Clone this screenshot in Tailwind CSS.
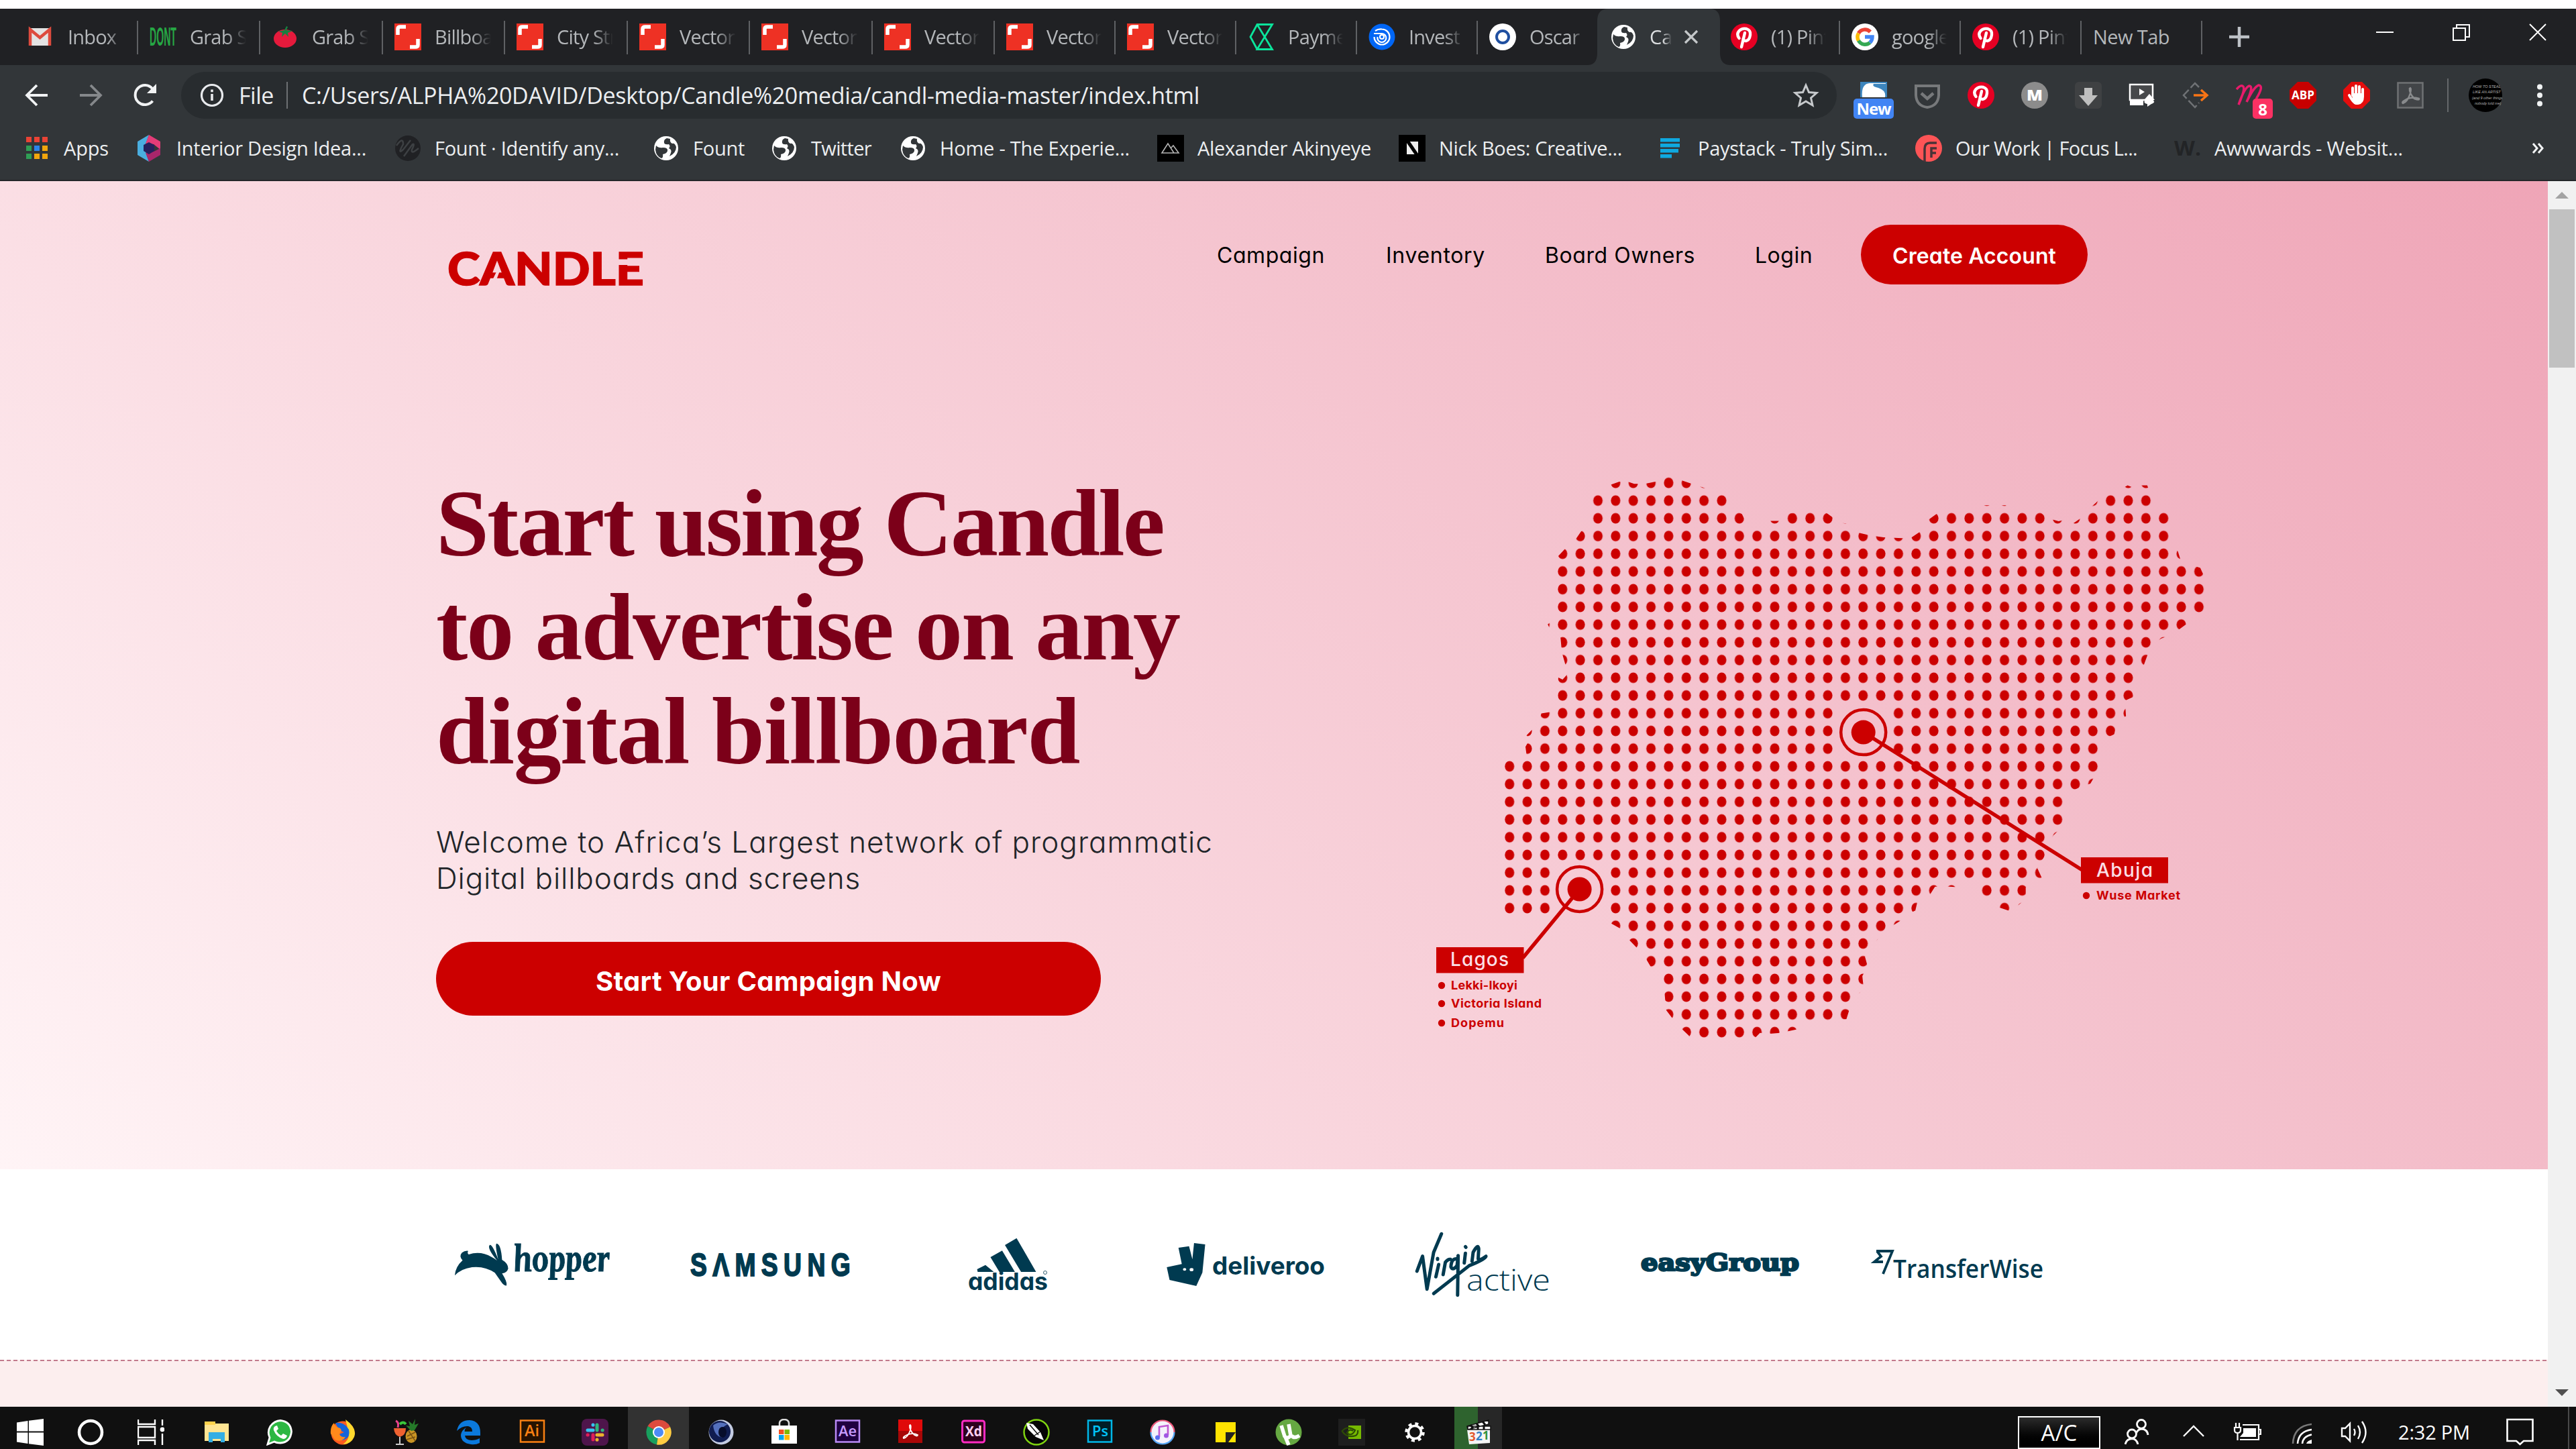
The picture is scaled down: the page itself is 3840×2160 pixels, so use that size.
<!DOCTYPE html>
<html lang="en">
<head>
<meta charset="utf-8">
<title>Candle</title>
<script src="https://cdn.jsdelivr.net/npm/@tailwindcss/browser@4"></script>
</head>
<body class="w-[3840px] h-[2160px] overflow-hidden bg-white font-['Open_Sans',sans-serif]">
<svg class="hidden">
  <symbol id="globe" viewBox="0 0 40 40"><circle cx="20" cy="20" r="18" fill="#fff"/><path d="M5 16Q9 20 15 19Q23 19 22 24Q21 28 15 29Q16 34 13 35Q5 32 4 22ZM21 5Q16 7 17 12Q18 15 24 14Q27 17 24 20Q29 22 27 27L25 32Q35 27 35 18Q33 12 29 13Q25 11 26 6Z" fill="#323639"/></symbol>
  <symbol id="shutter" viewBox="0 0 40 40"><path fill="#ee3124" d="M0 0h40v40H0z"/><path d="M5 17V8Q5 5 9 5H17M35 23V32Q35 35 31 35H23" fill="none" stroke="#fff" stroke-width="5.500"/></symbol>
  <symbol id="pin" viewBox="0 0 40 40"><circle cx="20" cy="20" r="20" fill="#e60023"/><path d="M12.500 22Q8 16 12.500 11Q17 6.500 23.500 8Q30 10 29 17Q28 25 22.500 26Q19 26 18.500 23M21 14L16 35" fill="none" stroke="#fff" stroke-width="4.400" stroke-linecap="round"/></symbol>
</svg>

<div class="h-[13px] bg-white"></div>

<!-- tab strip -->
<div class="h-[84px] bg-[#202124] flex text-[29px] text-[#b4b7ba] relative">
  <div class="w-[206px] flex items-center pl-[40px] relative"><svg class="w-10 h-10 shrink-0" viewBox="0 0 40 40"><path fill="#e3e3e3" d="M3 7h33v26H3z"/><path d="M5 33V9L19.500 21L34 9V33" fill="none" stroke="#dd4b3e" stroke-width="4.500"/></svg><span class="ml-[21px] w-[84px] overflow-hidden whitespace-nowrap tracking-[-0.8px] [mask-image:linear-gradient(to_right,#000_70%,transparent)]">Inbox</span><i class="absolute right-0 top-[18px] w-[2px] h-[50px] bg-[#5f6164]"></i></div>
  <div class="w-[182px] flex items-center pl-[17px] relative"><svg class="w-10 h-10 shrink-0" viewBox="0 0 40 40"><text x="0" y="33" textLength="40" lengthAdjust="spacingAndGlyphs" font-family="Liberation Sans" font-weight="bold" font-size="38" fill="#26a744">DONT</text></svg><span class="ml-[20px] w-[84px] overflow-hidden whitespace-nowrap tracking-[-0.8px] [mask-image:linear-gradient(to_right,#000_65%,transparent)]">Grab S</span><i class="absolute right-0 top-[18px] w-[2px] h-[50px] bg-[#5f6164]"></i></div>
  <div class="w-[183px] flex items-center pl-[17px] relative"><svg class="w-10 h-10 shrink-0" viewBox="0 0 40 40"><ellipse cx="20" cy="22.500" rx="17" ry="13.500" fill="#e51a3c"/><path d="M10 12L19 10L22 4L24 5L22 10L31 11L24 14L25 20L20 15L15 20L16 14Z" fill="#178040"/></svg><span class="ml-[20px] w-[84px] overflow-hidden whitespace-nowrap tracking-[-0.8px] [mask-image:linear-gradient(to_right,#000_65%,transparent)]">Grab S</span><i class="absolute right-0 top-[18px] w-[2px] h-[50px] bg-[#5f6164]"></i></div>
  <div class="w-[182px] flex items-center pl-[17px] relative"><svg class="w-10 h-10 shrink-0"><use href="#shutter"/></svg><span class="ml-[20px] w-[84px] overflow-hidden whitespace-nowrap tracking-[-0.8px] [mask-image:linear-gradient(to_right,#000_65%,transparent)]">Billboard</span><i class="absolute right-0 top-[18px] w-[2px] h-[50px] bg-[#5f6164]"></i></div>
  <div class="w-[183px] flex items-center pl-[17px] relative"><svg class="w-10 h-10 shrink-0"><use href="#shutter"/></svg><span class="ml-[20px] w-[84px] overflow-hidden whitespace-nowrap tracking-[-0.8px] [mask-image:linear-gradient(to_right,#000_65%,transparent)]">City Str</span><i class="absolute right-0 top-[18px] w-[2px] h-[50px] bg-[#5f6164]"></i></div>
  <div class="w-[182px] flex items-center pl-[17px] relative"><svg class="w-10 h-10 shrink-0"><use href="#shutter"/></svg><span class="ml-[20px] w-[84px] overflow-hidden whitespace-nowrap tracking-[-0.8px] [mask-image:linear-gradient(to_right,#000_65%,transparent)]">Vector</span><i class="absolute right-0 top-[18px] w-[2px] h-[50px] bg-[#5f6164]"></i></div>
  <div class="w-[183px] flex items-center pl-[17px] relative"><svg class="w-10 h-10 shrink-0"><use href="#shutter"/></svg><span class="ml-[20px] w-[84px] overflow-hidden whitespace-nowrap tracking-[-0.8px] [mask-image:linear-gradient(to_right,#000_65%,transparent)]">Vector</span><i class="absolute right-0 top-[18px] w-[2px] h-[50px] bg-[#5f6164]"></i></div>
  <div class="w-[182px] flex items-center pl-[17px] relative"><svg class="w-10 h-10 shrink-0"><use href="#shutter"/></svg><span class="ml-[20px] w-[82px] overflow-hidden whitespace-nowrap tracking-[-0.8px] [mask-image:linear-gradient(to_right,#000_65%,transparent)]">Vector</span><i class="absolute right-0 top-[18px] w-[2px] h-[50px] bg-[#5f6164]"></i></div>
  <div class="w-[180px] flex items-center pl-[17px] relative"><svg class="w-10 h-10 shrink-0"><use href="#shutter"/></svg><span class="ml-[20px] w-[82px] overflow-hidden whitespace-nowrap tracking-[-0.8px] [mask-image:linear-gradient(to_right,#000_65%,transparent)]">Vector</span><i class="absolute right-0 top-[18px] w-[2px] h-[50px] bg-[#5f6164]"></i></div>
  <div class="w-[180px] flex items-center pl-[17px] relative"><svg class="w-10 h-10 shrink-0"><use href="#shutter"/></svg><span class="ml-[20px] w-[82px] overflow-hidden whitespace-nowrap tracking-[-0.8px] [mask-image:linear-gradient(to_right,#000_65%,transparent)]">Vector</span><i class="absolute right-0 top-[18px] w-[2px] h-[50px] bg-[#5f6164]"></i></div>
  <div class="w-[180px] flex items-center pl-[17px] relative"><svg class="w-10 h-10 shrink-0" viewBox="0 0 40 40"><path d="M13 1.500H36.500L14 38.500H36.500L14 1.500L4 20L14 38.500" fill="none" stroke="#0be49b" stroke-width="2.800"/></svg><span class="ml-[20px] w-[82px] overflow-hidden whitespace-nowrap tracking-[-0.8px] [mask-image:linear-gradient(to_right,#000_65%,transparent)]">Payment</span><i class="absolute right-0 top-[18px] w-[2px] h-[50px] bg-[#5f6164]"></i></div>
  <div class="w-[180px] flex items-center pl-[17px] relative"><svg class="w-10 h-10 shrink-0" viewBox="0 0 40 40"><circle cx="20" cy="20" r="19.500" fill="#0066f5"/><g fill="none" stroke="#fff" stroke-width="2.200"><circle cx="20" cy="20" r="3"/><path d="M8 15H20A6.500 6.500 0 1 1 13.500 20M10 11Q14 8 20 8.500A11.500 11.500 0 1 1 8.500 20"/></g></svg><span class="ml-[20px] w-[82px] overflow-hidden whitespace-nowrap tracking-[-0.8px] [mask-image:linear-gradient(to_right,#000_65%,transparent)]">Invest</span><i class="absolute right-0 top-[18px] w-[2px] h-[50px] bg-[#5f6164]"></i></div>
  <div class="w-[180px] flex items-center pl-[17px]"><svg class="w-10 h-10 shrink-0" viewBox="0 0 40 40"><circle cx="20" cy="20" r="20" fill="#fff"/><circle cx="20" cy="20" r="9" fill="none" stroke="#1f4fa0" stroke-width="4"/></svg><span class="ml-[20px] w-[82px] overflow-hidden whitespace-nowrap tracking-[-0.8px] [mask-image:linear-gradient(to_right,#000_75%,transparent)]">Oscar</span></div>
  <div class="w-[180px] flex items-center pl-[17px] relative"><svg class="absolute -left-[17px] top-0 w-[214px] h-[84px]" viewBox="0 0 214 84"><path d="M0 84Q15 84 15 66V18Q15 0 32 0H182Q198 0 198 18V66Q198 84 214 84Z" fill="#323639"/></svg><svg class="w-10 h-10 shrink-0 relative"><use href="#globe"/></svg><span class="ml-[19px] w-[33px] overflow-hidden whitespace-nowrap relative text-[#dcdee0] [mask-image:linear-gradient(to_right,#000_60%,transparent)]">Can</span><svg class="relative ml-[17px] w-[24px] h-[24px]" viewBox="0 0 24 24"><path d="M3 3L21 21M21 3L3 21" stroke="#c4c7c9" stroke-width="3.200"/></svg></div>
  <div class="w-[180px] flex items-center pl-[17px] relative"><svg class="w-10 h-10 shrink-0"><use href="#pin"/></svg><span class="ml-[20px] w-[82px] overflow-hidden whitespace-nowrap tracking-[-0.8px] [mask-image:linear-gradient(to_right,#000_65%,transparent)]">(1) Pint</span><i class="absolute right-0 top-[18px] w-[2px] h-[50px] bg-[#5f6164]"></i></div>
  <div class="w-[180px] flex items-center pl-[17px] relative"><svg class="w-10 h-10 shrink-0" viewBox="0 0 40 40"><circle cx="20" cy="20" r="20" fill="#fff"/><g fill="none" stroke-width="5.500"><path d="M10.500 14.500A11 11 0 0 1 28 12.500" stroke="#ea4335"/><path d="M10.500 14.500A11 11 0 0 0 10.500 25.500" stroke="#fbbc05"/><path d="M10.500 25.500A11 11 0 0 0 27.500 28.500" stroke="#34a853"/><path d="M27.500 28.500Q31 25 31 20H20" stroke="#4285f4"/></g></svg><span class="ml-[20px] w-[82px] overflow-hidden whitespace-nowrap tracking-[-0.8px] [mask-image:linear-gradient(to_right,#000_65%,transparent)]">google</span><i class="absolute right-0 top-[18px] w-[2px] h-[50px] bg-[#5f6164]"></i></div>
  <div class="w-[180px] flex items-center pl-[17px] relative"><svg class="w-10 h-10 shrink-0"><use href="#pin"/></svg><span class="ml-[20px] w-[82px] overflow-hidden whitespace-nowrap tracking-[-0.8px] [mask-image:linear-gradient(to_right,#000_65%,transparent)]">(1) Pint</span><i class="absolute right-0 top-[18px] w-[2px] h-[50px] bg-[#5f6164]"></i></div>
  <div class="w-[180px] flex items-center pl-[17px] relative whitespace-nowrap"><span data-fit="114">New Tab</span><i class="absolute right-0 top-[18px] w-[2px] h-[50px] bg-[#5f6164]"></i></div>
  <div class="flex items-center pl-[39px]"><svg class="w-8 h-8" viewBox="0 0 32 32"><path d="M16 1V31M1 16H31" stroke="#bdc1c6" stroke-width="4.500"/></svg></div>
  <div class="ml-auto flex gap-[88px] pr-[44px] pt-[22px]">
    <svg class="w-[26px] h-[26px]" viewBox="0 0 26 26"><path d="M0 13H26" stroke="#fff" stroke-width="2"/></svg>
    <svg class="w-[26px] h-[26px] overflow-visible" viewBox="0 0 26 26"><path d="M1 7H19V25H1ZM6 7V2H25V20H19" fill="none" stroke="#fff" stroke-width="2"/></svg>
    <svg class="w-[26px] h-[26px]" viewBox="0 0 26 26"><path d="M1 1L25 25M25 1L1 25" stroke="#fff" stroke-width="2"/></svg>
  </div>
</div>

<!-- toolbar -->
<div class="h-[90px] bg-[#323639] flex items-center text-[34px] text-[#eceef0]">
  <svg class="ml-[35px] w-10 h-10" viewBox="0 0 40 40"><path d="M36 20H6M20 5L5 20L20 35" fill="none" stroke="#f1f3f4" stroke-width="3.800"/></svg>
  <svg class="ml-[40px] w-10 h-10" viewBox="0 0 40 40"><path d="M4 20H34M20 5L35 20L20 35" fill="none" stroke="#85888b" stroke-width="3.800"/></svg>
  <svg class="ml-[41px] w-10 h-10" viewBox="0 0 40 40"><path d="M31.500 28.500A14.500 14.500 0 1 1 31 10" fill="none" stroke="#f1f3f4" stroke-width="4"/><path d="M37 3V17H23Z" fill="#f1f3f4"/></svg>
  <div class="ml-[34px] w-[2468px] h-[70px] rounded-full bg-[#282c2f] flex items-center">
    <svg class="ml-[26px] w-10 h-10 shrink-0" viewBox="0 0 40 40"><circle cx="20" cy="20" r="15.500" fill="none" stroke="#e8eaed" stroke-width="3.200"/><path d="M20 18V28M20 11.500V15.200" stroke="#e8eaed" stroke-width="3.600"/></svg>
    <span class="ml-[20px] w-[52px] shrink-0 whitespace-nowrap" data-fit="52">File</span>
    <i class="ml-[19px] w-[2px] h-10 bg-[#6d7073]"></i>
    <span class="ml-[21px] whitespace-nowrap" data-fit="1338">C:/Users/ALPHA%20DAVID/Desktop/Candle%20media/candl-media-master/index.html</span>
    <svg class="ml-auto mr-[26px] w-10 h-10" viewBox="0 0 40 40"><path d="M20 5L24.500 15.500L36 16.500L27.500 24L30 35L20 29L10 35L12.500 24L4 16.500L15.500 15.500Z" fill="none" stroke="#c6c9cc" stroke-width="3"/></svg>
  </div>
  <div class="flex items-center gap-[40px] ml-[35px]">
    <div class="relative w-10 h-10"><svg class="w-10 h-10" viewBox="0 0 40 40"><path fill="#3d85bd" d="M0 0H40V23H0Z"/><path fill="#fff" d="M38 3H20Q17 7 27 9Q39 13 37 23H3Q1 3 14 2H38Z"/></svg><span class="absolute -left-[10px] top-[25px] w-[60px] h-[30px] rounded-[5px] bg-[#4285f4] text-white text-[24px] leading-[30px] font-bold text-center tracking-[-1px]">New</span></div>
    <svg class="w-10 h-10" viewBox="0 0 40 40"><path d="M3 6H37V20Q36 36 20 38Q4 36 3 20Z" fill="none" stroke="#77797b" stroke-width="4"/><path d="M11 17L20 25L29 17" fill="none" stroke="#77797b" stroke-width="4.500"/></svg>
    <svg class="w-10 h-10"><use href="#pin"/></svg>
    <svg class="w-10 h-10" viewBox="0 0 40 40"><circle cx="20" cy="20" r="20" fill="#8c8c8c"/><text x="8" y="28" font-family="Open Sans" font-weight="800" font-size="23" fill="#fff" textLength="24" lengthAdjust="spacingAndGlyphs">M</text></svg>
    <svg class="w-10 h-10" viewBox="0 0 40 40"><rect width="40" height="40" rx="6" fill="#3f4143"/><path d="M14 9H26V20H34L20 36L6 20H14Z" fill="#bfbfbf"/></svg>
    <svg class="w-10 h-10" viewBox="0 0 40 40"><path fill="#47494b" stroke="#fff" stroke-width="2.500" d="M2 4H36V27H2Z"/><path d="M16 10L24 15L16 20ZM2 28H22V35H2Z" fill="#fff"/><path d="M31 18L39 27H35Q42 30 34 33L28 37V33Q20 31 26 26H24Z" fill="#fff"/></svg>
    <svg class="w-10 h-10" viewBox="0 0 40 40"><path d="M25 8L19 2L2 20L19 38L25 31" fill="none" stroke="#6f7275" stroke-width="2.500" stroke-dasharray="18 4"/><path d="M17 20H36M28 12L37 20L28 28" fill="none" stroke="#f87415" stroke-width="3.500"/></svg>
    <div class="relative w-10 h-10"><svg class="w-10 h-10" viewBox="0 0 40 40"><path d="M1 11Q8 3 11 7Q14 11 4 34Q13 8 20 6Q27 6 16 30Q27 7 34 5Q42 6 31 24Q29 31 36 30" fill="none" stroke="#e81b6b" stroke-width="3.500"/></svg><span class="absolute left-[25px] top-[25px] w-[30px] h-[30px] rounded-[5px] bg-[#fb3163] text-white text-[24px] leading-[31px] font-bold text-center">8</span></div>
    <svg class="w-10 h-10" viewBox="0 0 40 40"><path d="M12 0H28L40 12V28L28 40H12L0 28V12Z" fill="#c80000"/><text x="3" y="26" textLength="34" lengthAdjust="spacingAndGlyphs" font-family="Open Sans" font-weight="bold" font-size="17" fill="#fff">ABP</text></svg>
    <svg class="w-10 h-10" viewBox="0 0 40 40"><path d="M12 0H28L40 12V28L28 40H12L0 28V12Z" fill="#e40d0d"/><path d="M14 20V9M19 18V6M24 18V7M29 20V11M29 18V22Q29 31 22 32H19Q15 31 9 20" fill="none" stroke="#fff" stroke-width="4" stroke-linecap="round"/><path d="M13 17H29V26L22 33L14 28Z" fill="#fff"/></svg>
    <svg class="w-10 h-10" viewBox="0 0 40 40"><path fill="#424548" stroke="#6f7173" stroke-width="2.500" d="M1.500 1.500H38.500V38.500H1.500Z"/><path d="M19 9Q22 9 20 17Q16 30 9 32Q6 30 16 25Q26 22 33 25Q34 28 26 25Q18 17 19 9" fill="none" stroke="#898b8d" stroke-width="2.500"/></svg>
  </div>
  <i class="ml-[35px] w-[2px] h-[50px] bg-[#65686b]"></i>
  <svg class="ml-[30px] w-[50px] h-[50px]" viewBox="0 0 50 50"><circle cx="25" cy="25" r="25" fill="#000"/><g font-family="Liberation Sans" font-size="5.500" font-style="italic" fill="#b5b5b5"><text x="6" y="14">HOW TO STEAL</text><text x="6" y="22">LIKE AN ARTIST</text><text x="5" y="31">(and 9 other things</text><text x="9" y="39">nobody told me)</text></g></svg>
  <svg class="ml-[50px] w-[12px] h-10" viewBox="0 0 12 40"><g fill="#f1f3f4"><circle cx="6" cy="7.500" r="4"/><circle cx="6" cy="20" r="4"/><circle cx="6" cy="32.500" r="4"/></g></svg>
</div>

<!-- bookmarks -->
<div class="h-[83px] bg-[#323639] border-b-2 border-[#232629] flex items-center pl-[35px] pb-[13px] text-[29px] text-[#eceef0] whitespace-nowrap">
  <div class="w-[168px] shrink-0 flex items-center gap-[20px]"><svg class="w-10 h-10 shrink-0" viewBox="0 0 40 40"><path fill="#ea4335" d="M4 3h8v8H4zM16 3h8v8h-8zM28 3h8v8h-8z"/><path fill="#2f9e55" d="M4 16h8v8H4zM4 28h8v8H4z"/><path fill="#2b84ea" d="M16 16h8v8h-8z"/><path fill="#f2a60d" d="M28 16h8v8h-8zM16 28h8v8h-8zM28 28h8v8h-8z"/></svg><span data-fit="67">Apps</span></div>
  <div class="w-[385px] shrink-0 flex items-center gap-[20px]"><svg class="w-10 h-10 shrink-0" viewBox="0 0 40 40"><path fill="#4aaee0" d="M19 0L2 10V30L19 40L14 24V14Z"/><path fill="#e43c78" d="M19 0L36 10V22L26 14L14 13Z"/><path fill="#a9266b" d="M36 20V30L19 40L14 27L26 25Z"/><path fill="#26205c" d="M19 11L27 15V24L19 29L11 24V15Z"/></svg><span data-fit="283">Interior Design Idea...</span></div>
  <div class="w-[385px] shrink-0 flex items-center gap-[20px]"><svg class="w-10 h-10 shrink-0" viewBox="0 0 40 40"><circle cx="20" cy="20" r="19" fill="#202124"/><path d="M3 16Q13 2 13 14Q4 30 13 22L24 8M14 32L27 14Q31 12 26 22Q24 30 36 20" fill="none" stroke="#3d4043" stroke-width="2.500"/></svg><span data-fit="275">Fount · Identify any...</span></div>
  <div class="w-[176px] shrink-0 flex items-center gap-[20px]"><svg class="w-10 h-10 shrink-0"><use href="#globe"/></svg><span data-fit="77">Fount</span></div>
  <div class="w-[192px] shrink-0 flex items-center gap-[20px]"><svg class="w-10 h-10 shrink-0"><use href="#globe"/></svg><span data-fit="90">Twitter</span></div>
  <div class="w-[384px] shrink-0 flex items-center gap-[20px]"><svg class="w-10 h-10 shrink-0"><use href="#globe"/></svg><span data-fit="283">Home - The Experie...</span></div>
  <div class="w-[360px] shrink-0 flex items-center gap-[20px]"><svg class="w-10 h-10 shrink-0" viewBox="0 0 40 40"><path d="M0 0h40v40H0z"/><path d="M7 27L16 13L25 27ZM20 20L24 16L32 27H7" fill="none" stroke="#b4b4b4" stroke-width="1.600"/></svg><span data-fit="259">Alexander Akinyeye</span></div>
  <div class="w-[386px] shrink-0 flex items-center gap-[20px]"><svg class="w-10 h-10 shrink-0" viewBox="0 0 40 40"><path d="M0 0h40v40H0z"/><path fill="#eee" d="M12 10H29V29H12Z"/><path d="M13 9L28 31" stroke="#000" stroke-width="5"/></svg><span data-fit="273">Nick Boes: Creative...</span></div>
  <div class="w-[384px] shrink-0 flex items-center gap-[20px]"><svg class="w-10 h-10 shrink-0" viewBox="0 0 40 40"><path fill="#0fa9e0" d="M4 5h29v5.500H4zM4 13h29v5.500H4zM4 21h27v5.500H4zM4 29h17v5.500H4z"/></svg><span data-fit="283">Paystack - Truly Sim...</span></div>
  <div class="w-[386px] shrink-0 flex items-center gap-[20px]"><svg class="w-10 h-10 shrink-0" viewBox="0 0 40 40"><circle cx="20" cy="20" r="20" fill="#fd5456"/><path d="M14 40V21Q14 12 22 12H32M24 34V20H32M24 27H31" fill="none" stroke="#4a3337" stroke-width="3.500"/></svg><span data-fit="271">Our Work | Focus L...</span></div>
  <div class="w-[400px] shrink-0 flex items-center gap-[20px]"><svg class="w-10 h-10 shrink-0" viewBox="0 0 40 40"><text x="0" y="31" textLength="40" lengthAdjust="spacingAndGlyphs" font-family="Open Sans" font-weight="bold" font-size="30" fill="#222426">W.</text></svg><span data-fit="281">Awwwards - Websit...</span></div>
  <svg class="ml-[131px] w-[22px] h-[16px] shrink-0" viewBox="0 0 22 16"><path d="M4 1L10 8L4 15M12 1L18 8L12 15" fill="none" stroke="#f1f3f4" stroke-width="3"/></svg>
</div>

<!-- page viewport -->
<div class="flex h-[1827px]">
 <div class="w-[3798px] font-['Inter',sans-serif] [font-feature-settings:'cv11']">
  <section class="h-[1473px] bg-[linear-gradient(45deg,#fff4f6_0%,#fadae1_33%,#f4c0cc_66%,#efa5b7_100%)]">
   <header class="flex h-[230px] text-[32px] text-black whitespace-nowrap">
     <svg class="ml-[665px] mt-[100px] w-[300px] h-[62px]" viewBox="0 0 300 62">
       <mask id="cuts"><path fill="#fff" d="M0 0h300v62H0z"/><path fill="#000" d="M240 16.500H300V25H240ZM65 56L77 31L80 34L75 47L71 56Z"/></mask>
       <text mask="url(#cuts)" x="2" y="54.500" textLength="293" lengthAdjust="spacingAndGlyphs" font-family="Lato" font-weight="900" font-size="67" fill="#c00" stroke="#c00" stroke-width="1.500">CANDLE</text>
     </svg>
     <nav class="flex items-start pt-[87px] w-[1739px] shrink-0">
       <a class="ml-[849px]" data-fit="161">Campaign</a><a class="ml-[91px]" data-fit="148">Inventory</a><a class="ml-[89px]" data-fit="224">Board Owners</a><a class="ml-[89px]" data-fit="86">Login</a>
     </nav>
     <a class="ml-[70px] mt-[65px] w-[338px] h-[89px] rounded-full bg-[#c00] text-white font-semibold flex items-center justify-center pt-[4px]"><span data-fit="244">Create Account</span></a>
   </header>
   <div class="flex">
    <div class="ml-[650px] pt-[203px] w-[1300px] whitespace-nowrap">
      <h1 class="font-['Liberation_Serif',serif] font-bold text-[142px] leading-[155px] text-[#7c0019]">
        <span class="block w-max" data-fit="1084">Start using Candle</span><span class="block w-max" data-fit="1108">to advertise on any</span><span class="block w-max" data-fit="959">digital billboard</span>
      </h1>
      <p class="mt-[60px] font-light text-[44px] leading-[54px] text-[#212529]"><span class="block w-max" data-fit="1158">Welcome to Africa’s Largest network of programmatic</span><span class="block w-max" data-fit="633">Digital billboards and screens</span></p>
      <a class="mt-[68px] w-[991px] h-[110px] rounded-full bg-[#c00] text-white text-[40px] font-bold flex items-center justify-center pt-[8px]"><span data-fit="515">Start Your Campaign Now</span></a>
    </div>
    <svg class="ml-[150px] mt-[180px] w-[1240px] h-[900px]" viewBox="0 0 1240 900" font-family="Inter">
      <defs>
        <pattern id="dots" patternUnits="userSpaceOnUse" x="137.100" y="26.600" width="26.350" height="26.410"><ellipse cx="13.170" cy="13.200" rx="7" ry="7.800" fill="#c00"/></pattern>
        <clipPath id="country"><path clip-rule="evenodd" transform="scale(.7908 .574)" d="M340 100L381 74L397 66L413 66L425 72L445 72L465 66L475 55L495 52L515 63L532 71L556 82L585 98L605 102L612 120L615 142L628 150L640 185L665 192L682 168L698 168L712 150L735 145L785 145L800 160L810 172L825 175L830 190L846 198L870 206L895 211L930 213L948 211L965 195L975 170L995 150L1040 140L1085 127L1125 127L1140 142L1190 145L1205 162L1215 165L1225 169L1240 164L1252 175L1268 160L1280 140L1296 120L1310 100L1340 88L1355 76L1366 82L1380 76L1392 76L1402 110L1415 140L1440 150L1432 190L1435 220L1450 248L1455 270L1480 285L1492 290L1502 320L1505 400L1500 405L1470 432L1450 452L1440 462L1418 474L1402 490L1393 515L1385 545L1370 565L1368 600L1366 625L1350 635L1352 675L1335 690L1330 722L1310 735L1300 770L1300 815L1285 850L1262 862L1240 875L1235 930L1230 965L1215 985L1205 1010L1198 1040L1185 1070L1195 1100L1178 1110L1163 1120L1163 1150L1150 1165L1130 1180L1113 1172L1100 1150L1075 1140L1072 1105L1060 1095L1045 1100L1030 1119L1010 1117L992 1118L982 1140L960 1150L955 1180L940 1190L925 1208L900 1230L883 1256L868 1280L860 1300L865 1325L855 1350L857 1375L850 1394L835 1405L830 1440L825 1462L790 1465L760 1475L730 1489L700 1498L680 1500L662 1498L650 1515L530 1512L528 1505L515 1488L497 1460L485 1438L482 1390L475 1345L460 1335L445 1300L430 1277L416 1257L420 1240L400 1228L382 1214L375 1190L178 1190L178 790L200 785L222 775L220 755L228 735L222 725L234 708L245 690L250 668L268 664L282 650L280 590L282 575L290 580L298 568L296 545L290 516L288 500L286 470L282 455L266 448L262 437L272 425L280 400L280 262L295 240L315 215L325 195L345 180L345 130Z M806 645V783H906V645Z M272 1058V1195H372V1058Z"/></clipPath>
      </defs>
      <rect width="1240" height="900" fill="url(#dots)" clip-path="url(#country)"/>
      <g fill="none" stroke="#c00"><circle cx="677.700" cy="411.600" r="33.500" stroke-width="4.500"/><circle cx="254.600" cy="645.500" r="33.500" stroke-width="4.500"/><path d="M677.700 411.600L1004 617M254.600 645.500L170 748" stroke-width="5.500"/></g>
      <g fill="#c00"><circle cx="677.700" cy="411.600" r="18"/><circle cx="254.600" cy="645.500" r="18"/><path d="M41 732H171.500V770.500H41ZM1002 598H1132V636.500H1002Z"/><circle cx="49" cy="789" r="5.200"/><circle cx="49" cy="816" r="5.200"/><circle cx="49" cy="845" r="5.200"/><circle cx="1010" cy="655" r="5.200"/></g>
      <g fill="#fbdfe5" font-size="28" font-weight="500"><text x="62" y="760" textLength="87">Lagos</text><text x="1025" y="626.500" textLength="84">Abuja</text></g>
      <g fill="#c00" font-size="18" font-weight="700"><text x="63" y="794.500" textLength="99">Lekki-Ikoyi</text><text x="63" y="821.500" textLength="135">Victoria Island</text><text x="63" y="850.500" textLength="79">Dopemu</text><text x="1025" y="660.500" textLength="125">Wuse Market</text></g>
    </svg>
   </div>
  </section>

  <section class="h-[284px] bg-white flex items-start pt-[77px] pl-[670px] text-[#003a50]">
    <!-- each mark is drawn on a 120px tall strip -->
    <svg class="w-[350px] h-[120px]" viewBox="670 1820 350 120" fill="#003a50"><g transform="translate(600 1780) scale(.8292 .3333)"><path d="M94 364Q95 325 108 296Q101 278 107 262Q112 252 118 254Q116 265 119 270Q140 253 160 281Q166 288 170 297Q151 240 157 227Q162 226 172 292Q166 225 169 221Q177 222 179 294Q190 310 190 333Q188 352 179 355Q189 395 187 409Q182 411 177 391L166 352Q148 321 125 327Q105 334 94 364Z"/></g><text transform="translate(767 1895) skewX(6)" textLength="144" lengthAdjust="spacingAndGlyphs" font-family="Liberation Serif" font-style="italic" font-weight="bold" font-size="59" stroke="#003a50">hopper</text></svg>
    <svg class="w-[380px] h-[120px]" viewBox="1020 1820 380 120" fill="#003a50"><text transform="translate(1029 1902) scale(.76 1)" textLength="314" font-family="Liberation Sans" font-weight="bold" font-size="49" stroke="#003a50" stroke-width="2">SΛMSUNG</text></svg>
    <svg class="w-[300px] h-[120px]" viewBox="1400 1820 300 120" fill="#003a50"><g transform="translate(600 1780) scale(.8292 .3333)"><path d="M1033 336L1048 317L1063 348H1034ZM1057 282L1078 253L1101 348H1073ZM1083 228L1104 197L1139 348H1112Z"/></g><text x="1443" y="1923" textLength="119" lengthAdjust="spacingAndGlyphs" font-family="Inter" font-weight="bold" font-size="36" font-feature-settings="'cv11'">adidas</text><circle cx="1558" cy="1897" r="2.500" fill="none" stroke="#003a50" stroke-width=".8"/></svg>
    <svg class="w-[370px] h-[120px]" viewBox="1700 1820 370 120" fill="#003a50"><g transform="translate(600 1780) scale(.8292 .3333)"><path d="M1374 327L1401 313L1395 240L1414 233L1420 292L1423 219L1443 225L1438 351L1427 411L1379 384Z"/><path fill="#fff" d="M1403 337a3 6 0 1 0 6 0a3 6 0 1 0 -6 0M1415 338a3.500 7 0 1 0 7 0a3.500 7 0 1 0 -7 0"/></g><text x="1807" y="1900" textLength="168" lengthAdjust="spacingAndGlyphs" font-family="Inter" font-weight="bold" font-size="37">deliveroo</text></svg>
    <svg class="w-[330px] h-[120px]" viewBox="2070 1820 330 120" fill="#003a50"><g transform="translate(1900 1780) scale(.8292 .3333)" fill="none" stroke="#003a50" stroke-linecap="round" stroke-linejoin="round"><path vector-effect="non-scaling-stroke" stroke-width="5" d="M256 345L266 278L274 425L286 260L300 178M293 288V292M290 370L295 315M303 360L307 305Q312 290 316 292M329 290Q318 285 317 325Q320 345 328 320L330 275L329 452M343 235L344 238M341 308L343 265M355 300L357 260Q366 220 367 245L366 290Q368 300 380 278Q380 290 350 320L286 445"/></g><text x="2186" y="1924" textLength="125" lengthAdjust="spacingAndGlyphs" font-family="Open Sans" font-weight="300" font-size="44">active</text></svg>
    <svg class="w-[350px] h-[120px]" viewBox="2400 1820 350 120" fill="#003a50"><text x="2446" y="1894" textLength="236" lengthAdjust="spacingAndGlyphs" font-family="DejaVu Serif" font-weight="bold" font-size="36" stroke="#003a50" stroke-width="2.600">easyGroup</text></svg>
    <svg class="w-[340px] h-[120px]" viewBox="2750 1820 340 120" fill="#003a50"><path d="M2797 1865H2821L2807 1899M2798 1865L2804 1873L2794 1881H2807" fill="none" stroke="#003a50" stroke-width="3.800"/><text x="2822" y="1905" textLength="224" lengthAdjust="spacingAndGlyphs" font-family="Open Sans" font-weight="600" font-size="37">TransferWise</text></svg>
  </section>
  <div class="h-[2px] bg-[repeating-linear-gradient(to_right,#c27a8c_0_6px,#fceeee_6px_10px)]"></div>
  <section class="h-[68px] bg-[#fceeee]"></section>
 </div>
 <!-- scrollbar -->
 <div class="w-[42px] bg-[#f1f1f1] flex flex-col items-center">
   <svg class="w-[42px] h-[42px]" viewBox="0 0 42 42"><path d="M11 26L21 16L31 26Z" fill="#a3a3a3"/></svg>
   <div class="w-[38px] h-[236px] bg-[#c1c1c1]"></div>
   <svg class="mt-auto w-[42px] h-[42px]" viewBox="0 0 42 42"><path d="M11 16H31L21 26Z" fill="#505050"/></svg>
 </div>
</div>

<!-- taskbar -->
<div class="h-[63px] bg-[#101010] flex">
  <div class="w-[90px] flex justify-center pt-[18px]"><svg class="w-10 h-10" viewBox="0 0 40 40"><path fill="#fff" d="M0 5.500L16.500 3V18.500H0ZM18 2.800L40 0V18.500H18ZM0 20.500H16.500V37L0 34.500ZM18 20.500H40V40L18 37.200Z"/></svg></div>
  <div class="w-[90px] flex justify-center pt-[18px]"><svg class="w-10 h-10" viewBox="0 0 40 40"><circle cx="20" cy="20" r="17" fill="none" stroke="#fff" stroke-width="4.500"/></svg></div>
  <div class="w-[96px] flex justify-center pt-[18px] pr-[6px]"><svg class="w-10 h-10" viewBox="0 0 40 40"><path d="M1 1V8H26V1M1 12H26V28H1ZM1 39V32H26V39M37 1V10M37 22V39" fill="none" stroke="#fff" stroke-width="2.400"/><circle cx="37" cy="16" r="3.400" fill="#fff"/></svg></div>
  <div class="w-[94px] flex justify-center pt-[18px]"><svg class="w-10 h-10" viewBox="0 0 40 40"><path fill="#ffd24d" d="M2 4H18V10H2Z"/><path fill="#ffe593" d="M2 9L18 9V7H38V33H2Z"/><path fill="#34aee4" d="M8 35V20H32V35H26V30H14V35Z"/></svg></div>
  <div class="w-[94px] flex justify-center pt-[18px]"><svg class="w-10 h-10" viewBox="0 0 40 40"><path d="M2 38L5 28Q1 19 6 11Q12 3 21 2.500Q36 4 37.500 19Q36 35 21 36Q15 36 12 34Z" fill="#2cb742" stroke="#fff" stroke-width="2.800"/><path d="M13 11Q10 13 11 17Q15 27 25 30Q30 30 31 25L25 22L22 25Q17 22 15 18L18 15L16 10Z" fill="#fff"/></svg></div>
  <div class="w-[94px] flex justify-center pt-[18px]"><svg class="w-10 h-10" viewBox="0 0 40 40"><circle cx="20" cy="21" r="17.500" fill="#ff5b1f"/><path d="M24 1Q42 14 37 27Q32 38 20 38Q32 30 28 17Z" fill="#ffd92e"/><path d="M9 6Q22 4 29 16Q32 29 20 32Q10 30 13 24L22 20Q13 17 9 6Z" fill="#1564d9"/><path d="M2 22Q1 12 7 6Q8 12 16 14Q20 18 15 22Q16 28 24 27Q18 36 8 31Z" fill="#ff8a1b"/></svg></div>
  <div class="w-[94px] flex justify-center pt-[18px]"><svg class="w-10 h-10" viewBox="0 0 40 40"><ellipse cx="28" cy="26" rx="8.500" ry="10" fill="#c99424"/><path d="M22 26L34 20M21 31L34 27M24 18L34 33" stroke="#7b5413" stroke-width="1.500"/><path d="M28 18L20 10L26 11L24 3L30 8L34 0L33 9L39 7L33 17Z" fill="#257a29"/><path d="M2 14H20Q20 25 11 27Q3 25 2 14Z" fill="#ef6231"/><path d="M11 27V37M5 38H17" stroke="#ccc" stroke-width="2"/><path d="M5 3Q10 5 8 13" stroke="#e8418b" stroke-width="3" fill="none"/><path d="M11 8Q16 3 20 8" stroke="#39c73b" stroke-width="4" fill="none"/></svg></div>
  <div class="w-[94px] flex justify-center pt-[18px]"><svg class="w-10 h-10" viewBox="0 0 40 40"><path d="M2 18Q5 2 21 2Q37 3 37 21V25H14Q15 32 24 32Q31 32 36 29V36Q30 39 23 38Q8 36 8 24Q9 17 16 13Q13 16 13.500 19H25Q25 12 19 11Q10 10 2 18Z" fill="#0b79dc"/></svg></div>
  <div class="w-[94px] flex justify-center pt-[18px]"><svg class="w-10 h-10" viewBox="0 0 40 40"><path fill="#261300" stroke="#f98012" stroke-width="2.500" d="M3 2.500H38V34.500H3Z"/><text x="9" y="26" font-family="Open Sans" font-weight="600" font-size="23" fill="#f98012" textLength="22" lengthAdjust="spacingAndGlyphs">Ai</text></svg></div>
  <div class="w-[94px] flex justify-center pt-[18px]"><svg class="w-10 h-10" viewBox="0 0 40 40"><rect width="40" height="40" rx="8" fill="#4e154b"/><g stroke-width="5" stroke-linecap="round"><path d="M9 17H17M17 9V9.200" stroke="#36c5f0"/><path d="M23 9V17M31 17H31.200" stroke="#2eb67d"/><path d="M23 24H31M23 31V31.200" stroke="#ecb22e"/><path d="M17 24V31M9 24H9.200" stroke="#e01e5a"/></g></svg></div>
  <div class="w-[91px] ml-[2px] mr-[1px] shrink-0 bg-[#323232] flex justify-center pt-[18px]"><svg class="w-10 h-10" viewBox="0 0 40 40"><path d="M20 20L3.500 11A19 19 0 0 1 37 12Z" fill="#dd4b3e"/><path d="M20 20L3.500 11A19 19 0 0 0 17 38.500Z" fill="#18a05e"/><path d="M20 20L37 12A19 19 0 0 1 17 38.500Z" fill="#ffcd42"/><circle cx="20" cy="20" r="9" fill="#fff"/><circle cx="20" cy="20" r="7" fill="#4c8bf5"/></svg></div>
  <div class="w-[94px] flex justify-center pt-[18px]"><svg class="w-10 h-10" viewBox="0 0 40 40"><circle cx="20" cy="20" r="18.500" fill="#c3cbe2"/><circle cx="18" cy="19" r="16" fill="#101c50"/><path d="M8 10Q16 2 30 8Q16 14 22 28Q10 26 8 10" fill="#5470bd"/><ellipse cx="22" cy="20" rx="6" ry="8" fill="#070d2b"/></svg></div>
  <div class="w-[94px] flex justify-center pt-[18px]"><svg class="w-10 h-10" viewBox="0 0 40 40"><path d="M13 11V6Q14 1 20 1Q26 1 27 6V11" fill="none" stroke="#ddd" stroke-width="2.500"/><path d="M1 10H39V37H1Z" fill="#fff"/><path fill="#f25022" d="M12 16h7.500v7H12z"/><path fill="#7fba00" d="M20.500 16H28v7h-7.500z"/><path fill="#00a4ef" d="M12 24h7.500v7.500H12z"/><path fill="#ffb900" d="M20.500 24H28v7.500h-7.500z"/></svg></div>
  <div class="w-[94px] flex justify-center pt-[18px]"><svg class="w-10 h-10" viewBox="0 0 40 40"><path fill="#1f0040" stroke="#b98af5" stroke-width="2.500" d="M3 2.500H38V34.500H3Z"/><text x="7" y="26" font-family="Open Sans" font-weight="600" font-size="21" fill="#c79bff" textLength="27" lengthAdjust="spacingAndGlyphs">Ae</text></svg></div>
  <div class="w-[94px] flex justify-center pt-[18px]"><svg class="w-10 h-10" viewBox="0 0 40 40"><path fill="#e00a0a" d="M2 1H38V18H2Z"/><path fill="#a80707" d="M2 18H38V36H2Z"/><path d="M19 9Q22 9 20 17Q16 28 10 29Q8 27 17 23Q26 21 31 24Q31 27 26 24Q18 17 19 9" fill="none" stroke="#fff" stroke-width="1.800"/></svg></div>
  <div class="w-[94px] flex justify-center pt-[18px]"><svg class="w-10 h-10" viewBox="0 0 40 40"><rect x="3.500" y="3" width="33" height="32" rx="3" fill="#2e001e" stroke="#ff2bc2" stroke-width="3"/><text x="8" y="26" font-family="Open Sans" font-weight="700" font-size="22" fill="#ffd0f2" textLength="25" lengthAdjust="spacingAndGlyphs">Xd</text></svg></div>
  <div class="w-[94px] flex justify-center pt-[18px]"><svg class="w-10 h-10" viewBox="0 0 40 40"><circle cx="20" cy="20" r="18.500" fill="#050505" stroke="#7fd410" stroke-width="2.500"/><path d="M5 6L15 8L26 20L31 32L19 27L7 15Z" fill="#fff"/><path d="M10 9L23 24M17 25L26 19" stroke="#111" stroke-width="1.500"/></svg></div>
  <div class="w-[94px] flex justify-center pt-[18px]"><svg class="w-10 h-10" viewBox="0 0 40 40"><path fill="#001d26" stroke="#00b7e8" stroke-width="2.500" d="M3 2.500H38V34.500H3Z"/><text x="9" y="26" font-family="Open Sans" font-weight="600" font-size="21" fill="#00c3f7" textLength="24" lengthAdjust="spacingAndGlyphs">Ps</text></svg></div>
  <div class="w-[94px] flex justify-center pt-[18px]"><svg class="w-10 h-10" viewBox="0 0 40 40"><circle cx="20" cy="20" r="17.500" fill="#f4f2fb"/><path d="M2.500 20A17.500 17.500 0 0 1 37.500 20" fill="none" stroke="#ee5a7c" stroke-width="2.200"/><path d="M2.500 20A17.500 17.500 0 0 0 37.500 20" fill="none" stroke="#55a5f3" stroke-width="2.200"/><path d="M15 27V12L28 10V24" fill="none" stroke="#c158d2" stroke-width="2.600"/><circle cx="12.500" cy="28" r="3.500" fill="#5c6ff0"/><circle cx="25.500" cy="25" r="3.500" fill="#a158e3"/></svg></div>
  <div class="w-[94px] flex justify-center pt-[18px]"><svg class="w-10 h-10" viewBox="0 0 40 40"><path fill="#ffe300" d="M5 5H35V20H20V35H5Z"/><path fill="#222" d="M20 20H35L24 35H20Z"/><path fill="#ffe300" d="M35 20V35H24Z"/></svg></div>
  <div class="w-[94px] flex justify-center pt-[18px]"><svg class="w-10 h-10" viewBox="0 0 40 40"><circle cx="20" cy="20" r="19.500" fill="#66a842"/><path d="M9 10L14 26Q18 31 23 25L20 8M24 25Q28 30 36 25M15 27L20 39" fill="none" stroke="#fff" stroke-width="5.500"/></svg></div>
  <div class="w-[94px] flex justify-center pt-[18px]"><svg class="w-10 h-10" viewBox="0 0 40 40"><path fill="#1e1e1e" d="M0 0h40v40H0z"/><path fill="#76b900" d="M15 10H34V30H15Z"/><path d="M5 19Q13 9 25 17Q20 27 13 21Q16 14 22 18M6 19Q13 29 26 25Q30 22 29 17" fill="none" stroke="#2d4a05" stroke-width="2.200"/></svg></div>
  <div class="w-[94px] flex justify-center pt-[18px]"><svg class="w-10 h-10" viewBox="0 0 40 40"><circle cx="20" cy="20" r="9.500" fill="none" stroke="#fff" stroke-width="3.500"/><circle cx="20" cy="20" r="12.500" fill="none" stroke="#fff" stroke-width="4.500" stroke-dasharray="4.800 5.017"/></svg></div>
  <div class="w-[71px] ml-[12px] bg-[linear-gradient(to_right,#2e632e_50%,#272727_50%)] flex justify-center pt-[18px]"><svg class="w-10 h-10" viewBox="0 0 40 40"><path d="M3 16H37V36L6 38Z" fill="#f5f5f5"/><path d="M3 11L35 2V8L4 16ZM4 11H38V16H4Z" fill="#fff" stroke="#111" stroke-width="1.500"/><path d="M8 9L12 14M17 7L21 12M26 4L30 9M10 11V16M19 11V16M28 11V16" stroke="#111" stroke-width="3"/><g font-family="Open Sans" font-weight="bold" font-size="17"><text x="6" y="33" fill="#e2572b">3</text><text x="16" y="32" fill="#2f80c5">2</text><text x="26" y="31" fill="#31923a">1</text></g></svg></div>
  <div class="ml-[769px] mt-[14px] h-[49px] w-[123px] shrink-0 border-2 border-white bg-gradient-to-b from-[#2c2c2c] to-black flex items-center justify-center text-white text-[33px]"><span data-fit="54">A/C</span></div>
  <svg class="ml-[36px] mt-[18px] w-[38px] h-[40px] shrink-0" viewBox="0 0 38 40"><g fill="none" stroke="#fff" stroke-width="2.800"><circle cx="25" cy="8" r="6.500"/><circle cx="11" cy="22.500" r="6.500"/><path d="M17 22Q20 15 26 15Q34 16 35 24M1 38Q3 30 11 29.500Q18 30 20 38"/></g></svg>
  <svg class="ml-[48px] mt-[26px] w-[34px] h-[20px] shrink-0" viewBox="0 0 34 20"><path d="M2 18L17 3L32 18" fill="none" stroke="#fff" stroke-width="2.400"/></svg>
  <svg class="ml-[42px] mt-[22px] w-[42px] h-[30px] shrink-0" viewBox="0 0 42 30"><path d="M14 5H38V27H10M38 12H41V19H38M2 9H11V13Q11 17 6.500 17Q2 17 2 13ZM4 9V2M9 9V2M6.500 17V28" fill="none" stroke="#fff" stroke-width="2.200"/><path d="M15 10H34V23H10L15 17Z" fill="#fff"/></svg>
  <svg class="ml-[45px] mt-[24px] w-[31px] h-[32px] shrink-0" viewBox="0 0 31 32"><g fill="none" stroke-width="2.600"><path d="M2 31Q3 5 30 2" stroke="#777"/><path d="M9 31Q10 13 30 10M16 31Q17 20 30 17.500" stroke="#fff"/></g><path d="M22 31Q23 27 30 25V31Z" fill="#fff"/></svg>
  <svg class="ml-[42px] mt-[20px] w-[42px] h-[36px] shrink-0" viewBox="0 0 42 36"><path d="M2 12H7L14 5V31L7 24H2ZM20 13Q23 18 20 23M26 8Q32 18 26 28M32 2Q43 18 32 34" fill="none" stroke="#fff" stroke-width="2.400"/></svg>
  <span class="ml-[44px] pt-[16px] w-[108px] shrink-0 whitespace-nowrap text-white text-[29px] leading-[44px]" data-fit="107">2:32 PM</span>
  <svg class="ml-[53px] mt-[17px] w-[41px] h-[42px] shrink-0" viewBox="0 0 41 42"><path d="M1.500 2H39.500V34H26L20.500 39L15 34H1.500Z" fill="none" stroke="#fff" stroke-width="2.600"/></svg>
  <i class="ml-auto mr-[10px] w-[2px] bg-[#4a4a4a]"></i>
</div>
<script>
// Evens out the tracking of each label so that it fills the width given in data-fit.
function fitLabels() {
  document.querySelectorAll('[data-fit]').forEach(el => {
    el.style.letterSpacing = '0px';
    const range = document.createRange();
    range.selectNodeContents(el);
    const gap = Number(el.dataset.fit) - range.getBoundingClientRect().width;
    el.style.letterSpacing = (gap / el.textContent.length).toFixed(3) + 'px';
  });
}
// The body's size changes once the stylesheet is in force, so the labels are measured again then.
new ResizeObserver(fitLabels).observe(document.body);
window.addEventListener('load', fitLabels);
document.fonts.ready.then(fitLabels);
</script>
</body>
</html>
